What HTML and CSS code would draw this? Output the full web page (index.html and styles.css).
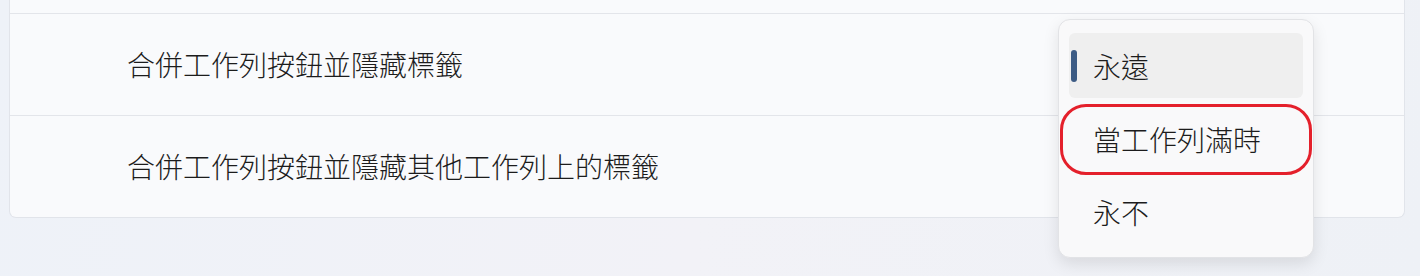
FILE: index.html
```html
<!DOCTYPE html>
<html lang="zh-Hant">
<head>
  <meta charset="UTF-8">
  <title>工作列設定</title>
  <link rel="stylesheet" href="styles.css">
</head>
<body>
<div class="page">
  <div class="card">
    <div class="row row-top"></div>
    <div class="row">
      <span class="label">合併工作列按鈕並隱藏標籤</span>
    </div>
    <div class="row">
      <span class="label">合併工作列按鈕並隱藏其他工作列上的標籤</span>
    </div>
  </div>

  <div class="menu">
    <div class="item selected"><span class="pill"></span>永遠</div>
    <div class="item marked">當工作列滿時<span class="ring"></span></div>
    <div class="item">永不</div>
  </div>
</div>
</body>
</html>
```

FILE: styles.css
```css
body { margin: 0; background: #eef1f6; font-family: "Noto Sans CJK TC", "Noto Sans", sans-serif; font-weight: 300; color: #1c1c1c; }
.page { position: relative; height: 276px; padding: 0 15px 0 9px; background: linear-gradient(100deg, #eef2f8 0%, #f2f2f7 50%, #eef1f6 100%); overflow: hidden; }
.card { background: #f9fafc; border: 1px solid #e1e4ea; border-top: none; border-radius: 0 0 7px 7px; }
.row { height: 101px; border-top: 1px solid #e3e5ea; display: flex; align-items: center; padding-left: 117px; }
.row-top { height: 13px; border-top: none; }
.label { font-size: 28px; line-height: 1; margin-top: -2px; }

.menu { position: absolute; left: 1058px; top: 19px; width: 256px; height: 239px; box-sizing: border-box; padding: 13px 10px; background: #f9f9fa; border: 1px solid #e2e3e6; border-radius: 12px; box-shadow: 0 6px 16px rgba(0,0,0,0.10); display: flex; flex-direction: column; gap: 8px; }
.item { position: relative; height: 66px; display: flex; align-items: center; padding-left: 24px; border-radius: 6px; font-size: 28px; line-height: 1; }
.selected { background: #efefef; }
.pill { position: absolute; left: 2px; top: 17px; width: 6px; height: 32px; border-radius: 3px; background: #3c5b84; }
.ring { position: absolute; left: -9px; right: -9px; top: -2px; bottom: -4px; border: 3px solid #e4202b; border-radius: 26px; }
```
